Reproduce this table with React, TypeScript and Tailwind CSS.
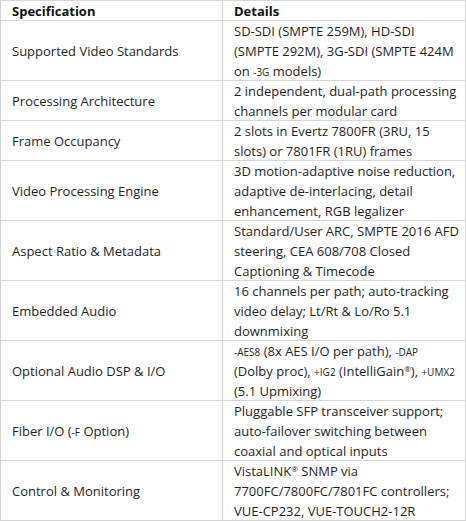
import React from "react";

const S = ({ children }: { children: React.ReactNode }) => (
  <span className="text-[10px]">{children}</span>
);

type Row = { spec: React.ReactNode; lines: React.ReactNode[]; h: string };

const rows: Row[] = [
  {
    spec: "Supported Video Standards",
    h: "h-[60px]",
    lines: [
      "SD-SDI (SMPTE 259M), HD-SDI",
      "(SMPTE 292M), 3G-SDI (SMPTE 424M",
      <>on <S>-3G</S> models)</>,
    ],
  },
  {
    spec: "Processing Architecture",
    h: "h-[40px]",
    lines: ["2 independent, dual-path processing", "channels per modular card"],
  },
  {
    spec: "Frame Occupancy",
    h: "h-[40px]",
    lines: ["2 slots in Evertz 7800FR (3RU, 15", "slots) or 7801FR (1RU) frames"],
  },
  {
    spec: "Video Processing Engine",
    h: "h-[60px]",
    lines: [
      "3D motion-adaptive noise reduction,",
      "adaptive de-interlacing, detail",
      "enhancement, RGB legalizer",
    ],
  },
  {
    spec: "Aspect Ratio & Metadata",
    h: "h-[60px]",
    lines: [
      "Standard/User ARC, SMPTE 2016 AFD",
      "steering, CEA 608/708 Closed",
      "Captioning & Timecode",
    ],
  },
  {
    spec: "Embedded Audio",
    h: "h-[60px]",
    lines: [
      "16 channels per path; auto-tracking",
      "video delay; Lt/Rt & Lo/Ro 5.1",
      "downmixing",
    ],
  },
  {
    spec: "Optional Audio DSP & I/O",
    h: "h-[60px]",
    lines: [
      <><S>-AES8</S> (8x AES I/O per path), <S>-DAP</S></>,
      <>(Dolby proc), <S>+IG2</S> (IntelliGain<sup className="text-[8px]">®</sup>), <S>+UMX2</S></>,
      "(5.1 Upmixing)",
    ],
  },
  {
    spec: <>Fiber I/O (<S>-F</S> Option)</>,
    h: "h-[60px]",
    lines: [
      "Pluggable SFP transceiver support;",
      "auto-failover switching between",
      "coaxial and optical inputs",
    ],
  },
  {
    spec: "Control & Monitoring",
    h: "h-[60px]",
    lines: [
      <>VistaLINK<sup className="text-[8px]">®</sup> SNMP via</>,
      "7700FC/7800FC/7801FC controllers;",
      "VUE-CP232, VUE-TOUCH2-12R",
    ],
  },
];

export default function App() {
  return (
    <div
      className="w-[466px] bg-white text-[13px] leading-[20px] text-[#1f1f1f]"
      style={{ fontFamily: '"Open Sans", sans-serif' }}
    >
      <div className="border border-b-0 border-[#d6d6d6]">
        <div className="grid grid-cols-[221px_1fr] h-[20px] border-b border-[#d6d6d6] font-bold text-[#111]">
          <div className="px-[11px] whitespace-nowrap">Specification</div>
          <div className="px-[11px] border-l border-[#d6d6d6] whitespace-nowrap">Details</div>
        </div>
        {rows.map((r, i) => (
          <div
            key={i}
            className={`grid grid-cols-[221px_1fr] ${r.h} border-b border-[#d6d6d6]`}
          >
            <div className="px-[11px] flex items-center whitespace-nowrap">
              <span>{r.spec}</span>
            </div>
            <div className="px-[11px] border-l border-[#d6d6d6]">
              {r.lines.map((l, j) => (
                <div key={j} className="whitespace-nowrap h-[20px]">
                  {l}
                </div>
              ))}
            </div>
          </div>
        ))}
      </div>
    </div>
  );
}
